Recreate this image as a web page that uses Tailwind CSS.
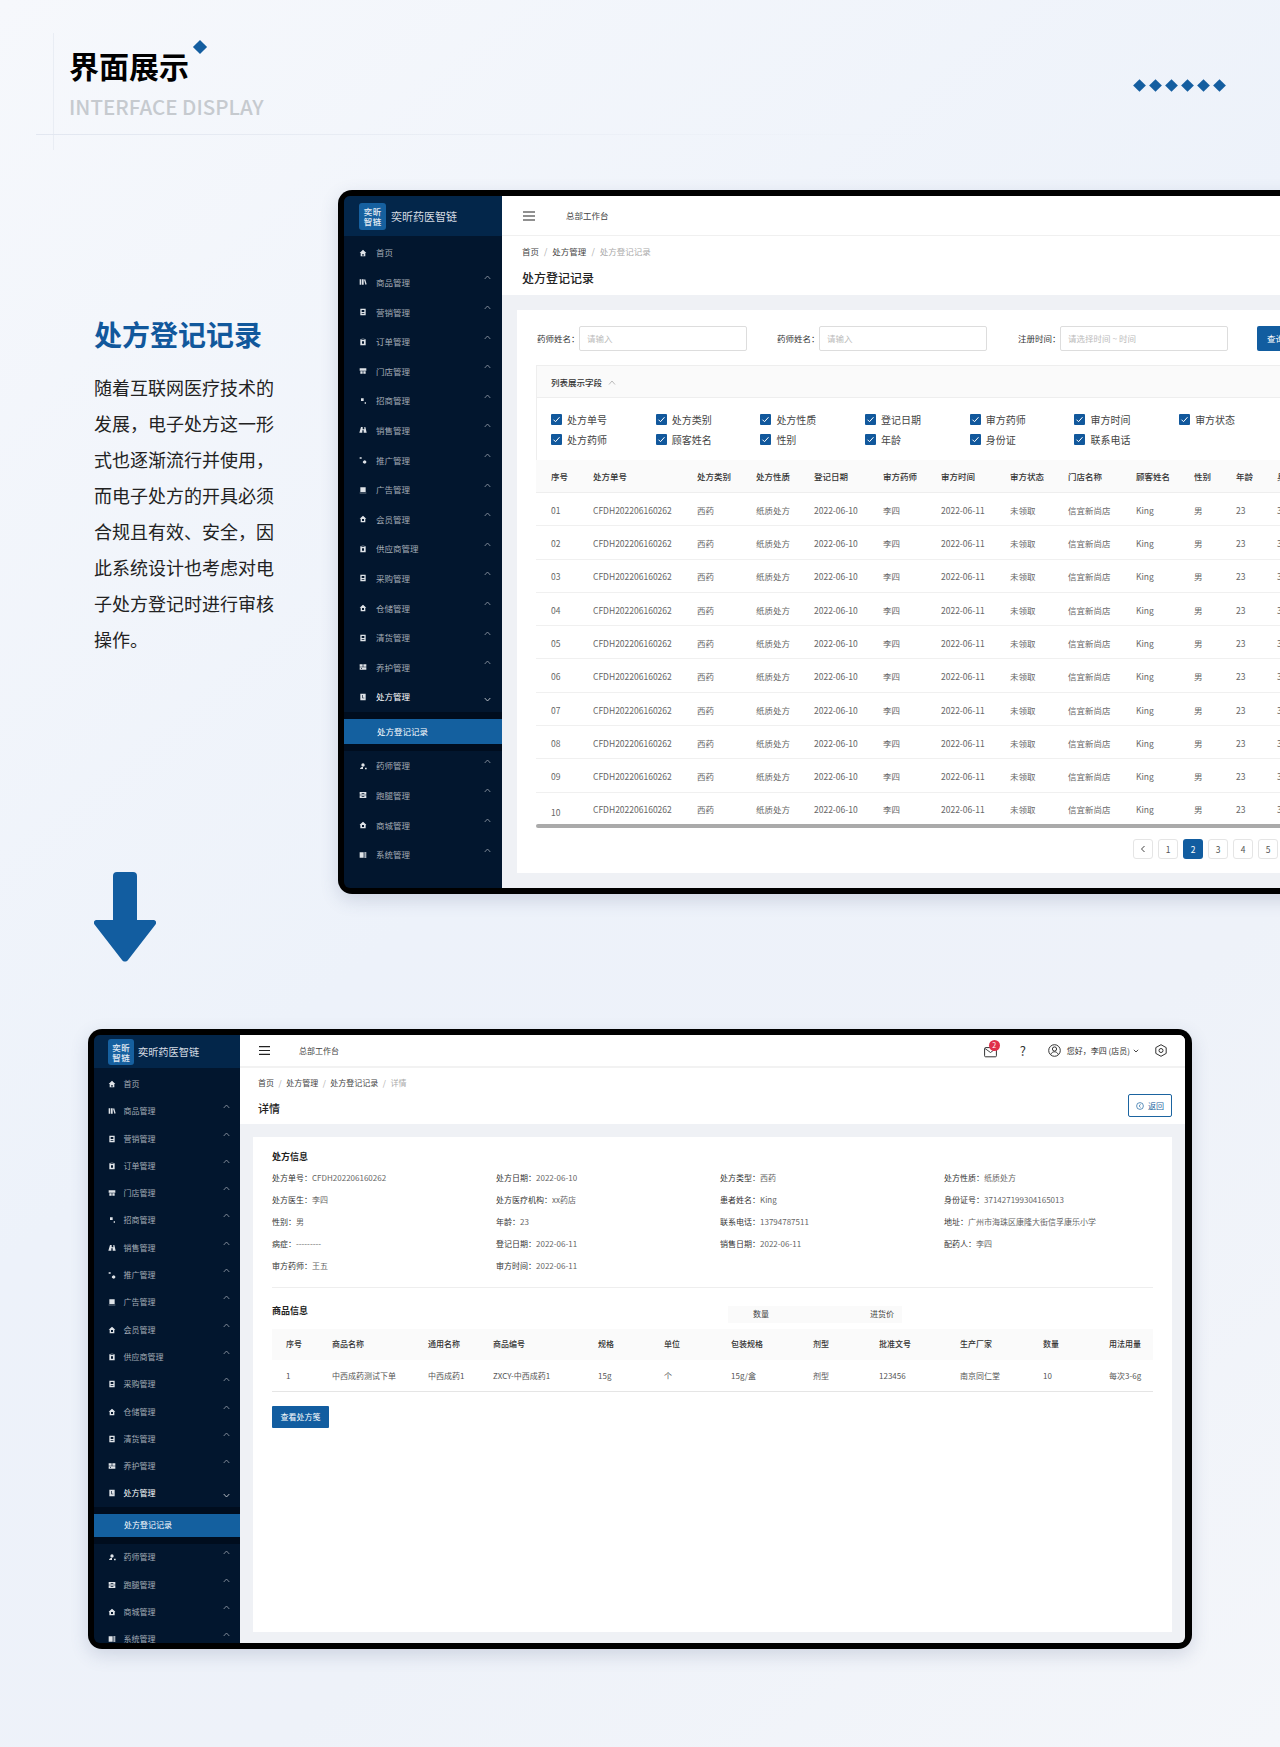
<!DOCTYPE html>
<html lang="zh-CN">
<head>
    <meta charset="UTF-8">
    <title>界面展示</title>
    <script src="https://cdn.jsdelivr.net/npm/@tailwindcss/browser@4"></script>
</head>
<body class="bg-[#f1f4fa]">
<div class="relative w-[1280px] h-[1747px] overflow-hidden font-['Noto_Sans_CJK_SC',sans-serif] bg-[linear-gradient(140deg,#f6f8fc_0%,#edf2fa_45%,#eef2f9_70%,#f4f6fa_100%)]">

    <!-- Section title -->
    <header class="relative h-[190px] flex justify-between">
        <div class="absolute left-[53px] top-[33px] w-px h-[117px] bg-[#e9edf4]"></div>
        <div class="absolute left-[36px] top-[134px] w-[900px] h-px bg-linear-to-r from-[#e2e7f0] to-transparent"></div>
        <div class="absolute left-[195px] top-[42px] w-[10px] h-[10px] rotate-45 bg-[#145ea0]"></div>
        <div class="pl-[69px] pt-[45px]">
            <h1 class="text-[30px] leading-[40px] font-bold text-black">界面展示</h1>
            <p class="mt-[6px] text-[20.500px] leading-[30px] font-medium text-[#c6cacf]">INTERFACE DISPLAY</p>
        </div>
        <div class="flex gap-[7px] pt-[80.5px] pr-[56.5px]">
            <span class="w-[9px] h-[9px] rotate-45 bg-[#145ea0]"></span>
            <span class="w-[9px] h-[9px] rotate-45 bg-[#145ea0]"></span>
            <span class="w-[9px] h-[9px] rotate-45 bg-[#145ea0]"></span>
            <span class="w-[9px] h-[9px] rotate-45 bg-[#145ea0]"></span>
            <span class="w-[9px] h-[9px] rotate-45 bg-[#145ea0]"></span>
            <span class="w-[9px] h-[9px] rotate-45 bg-[#145ea0]"></span>
        </div>
    </header>

    <div class="flex items-start">
        <!-- Intro text -->
        <div class="w-[338px] shrink-0 pl-[94px] pt-[124px]">
            <h2 class="text-[28px] leading-[40px] font-bold text-[#11589c]">处方登记记录</h2>
            <p class="mt-[15px] text-[18px] leading-[36px] text-[#222]">随着互联网医疗技术的<br>发展，电子处方这一形<br>式也逐渐流行并使用，<br>而电子处方的开具必须<br>合规且有效、安全，因<br>此系统设计也考虑对电<br>子处方登记时进行审核<br>操作。</p>
            <svg class="mt-[215px]" width="62" height="90" viewBox="0 0 62 90"><path fill="#125da0" d="M19 4a4 4 0 0 1 4-4h16a4 4 0 0 1 4 4v44h16c3 0 4 2.5 2.5 4.5L34 88c-1.5 2-4.5 2-6 0L.5 52.5C-1 50.5 0 48 3 48h16z"/></svg>
        </div>

        <!-- List screen -->
        <div class="w-[1000px] h-[704px] shrink-0 bg-black rounded-[14px] p-[6px] shadow-[0_6px_18px_rgba(60,80,120,0.18)]">
            <div class="flex h-full rounded-[6px] overflow-hidden">
                <aside id="side-big" class="w-[158px] shrink-0 bg-[#02162e]"></aside>
                <main class="flex-1 min-w-0 bg-[#eff1f5] overflow-hidden">
                    <div class="h-[40px] bg-white border-b border-[#f0f0f0] flex items-center pl-[21px]">
                        <svg width="12" height="10" viewBox="0 0 12 10" class="text-[#222]"><path d="M0 1h12M0 5h12M0 9h12" stroke="currentColor" stroke-width="1.2"/></svg>
                        <span class="ml-[31px] text-[8.5px] text-[#444]">总部工作台</span>
                    </div>
                    <div class="h-[59px] bg-white pl-[20px] pt-[8px]">
                        <div class="flex gap-[5px] text-[8.5px] leading-[14px] text-[#444]"><span>首页</span><span class="text-[#aaa]">/</span><span>处方管理</span><span class="text-[#aaa]">/</span><span class="text-[#aaa]">处方登记记录</span></div>
                        <h3 class="mt-[10px] text-[12px] leading-[20px] font-medium text-[#222]">处方登记记录</h3>
                    </div>
                    <div class="ml-[15px] mt-[15px] w-[800px] h-[563px] bg-white pl-[19px] pt-[16px]">
                        <!-- Filters -->
                        <div class="flex items-center h-[25px] text-[8.5px] text-[#333] whitespace-nowrap">
                            <span class="w-[43px] pl-px">药师姓名：</span>
                            <span class="w-[168px] h-full border border-[#ddd] rounded-[2px] flex items-center pl-[7px] text-[#bbb]">请输入</span>
                            <span class="ml-[30px] w-[42px]">药师姓名：</span>
                            <span class="w-[168px] h-full border border-[#ddd] rounded-[2px] flex items-center pl-[7px] text-[#bbb]">请输入</span>
                            <span class="ml-[31px] w-[42px]">注册时间：</span>
                            <span class="w-[168px] h-full border border-[#ddd] rounded-[2px] flex items-center pl-[7px] text-[#bbb]">请选择时间 ~ 时间</span>
                            <span class="ml-[29px] w-[60px] h-full bg-[#125da0] rounded-[2px] flex items-center pl-[10px] text-white">查询</span>
                        </div>
                        <!-- Field picker -->
                        <div class="mt-[14px] h-[33px] pt-px bg-[#fafafa] border border-[#eeeeee] flex items-center pl-[14px] text-[8.5px] font-medium text-[#333]">
                            列表展示字段
                            <svg class="ml-[6px]" width="8" height="5" viewBox="0 0 8 5"><path d="M1 4.5 4 1l3 3.5" fill="none" stroke="#aaa" stroke-width=".8"/></svg>
                        </div>
                        <div id="fields" class="h-[62px] border-x border-[#eeeeee] pl-[14px] pt-[11px] grid grid-cols-[repeat(7,104.7px)] auto-rows-[20.500px]"></div>
                        <!-- Table -->
                        <div class="h-[33px] bg-[#fafafa] border-b border-[#eeeeee] pl-[15px] grid grid-cols-[42px_104px_59px_58px_69px_58px_69px_58px_68px_58px_42px_41px_42px] items-center text-[8.5px] font-medium text-[#333]">
                            <span>序号</span><span>处方单号</span><span>处方类别</span><span>处方性质</span><span>登记日期</span><span>审方药师</span><span>审方时间</span><span>审方状态</span><span>门店名称</span><span>顾客姓名</span><span>性别</span><span>年龄</span><span>身份证</span>
                        </div>
                        <div id="rows"></div>
                        <div class="h-[4px] -mt-[2px] bg-[#aaaaaa] rounded-full"></div>
                        <!-- Pagination -->
                        <div class="mt-[11px] pl-[597px] flex gap-[5px] text-[8.5px] text-[#555]">
                            <span class="w-[20px] h-[20px] flex items-center justify-center border border-[#e5e5e5] rounded-[3px]"><svg width="6" height="8" viewBox="0 0 6 8"><path d="M4.5 1 1.5 4l3 3" fill="none" stroke="#444"/></svg></span>
                            <span class="w-[20px] h-[20px] flex items-center justify-center border border-[#e5e5e5] rounded-[3px]">1</span>
                            <span class="w-[20px] h-[20px] flex items-center justify-center bg-[#125da0] rounded-[3px] text-white">2</span>
                            <span class="w-[20px] h-[20px] flex items-center justify-center border border-[#e5e5e5] rounded-[3px]">3</span>
                            <span class="w-[20px] h-[20px] flex items-center justify-center border border-[#e5e5e5] rounded-[3px]">4</span>
                            <span class="w-[20px] h-[20px] flex items-center justify-center border border-[#e5e5e5] rounded-[3px]">5</span>
                        </div>
                    </div>
                </main>
            </div>
        </div>
    </div>

    <!-- Detail screen -->
    <div class="ml-[88px] mt-[67px] w-[1104px] h-[620px] bg-black rounded-[14px] pt-[6px] pb-[6px] pl-[6px] pr-[7px] shadow-[0_6px_18px_rgba(60,80,120,0.18)]">
        <div class="flex h-full rounded-[6px] overflow-hidden">
            <aside id="side-small" class="w-[145.5px] shrink-0 bg-[#02162e] overflow-hidden"></aside>
            <main class="flex-1 min-w-0 bg-[#eff1f5]">
                <div class="h-[33px] bg-white border-b-2 border-[#f2f2f2] flex items-center pl-[19.5px] pr-[18px]">
                    <svg width="11" height="9" viewBox="0 0 11 9"><path d="M0 .6h11M0 4.5h11M0 8.4h11" stroke="#222" stroke-width="1.1"/></svg>
                    <span class="ml-[29px] text-[8px] text-[#444]">总部工作台</span>
                    <div class="ml-auto flex items-center text-[8px] text-[#333]">
                        <span class="relative w-[14px] h-[12px]">
                            <svg width="13" height="11" viewBox="0 0 13 11" class="absolute left-0 top-[2px]"><rect x=".6" y=".6" width="11.8" height="9.2" rx="1" fill="none" stroke="#333" stroke-width="1"/><path d="m1 1.5 5.5 4 5.5-4" fill="none" stroke="#333" stroke-width=".9"/></svg>
                            <span class="absolute left-[5px] -top-[5px] w-[11px] h-[11px] rounded-full bg-[#e0304a] text-white text-[7px] leading-[11px] text-center">2</span>
                        </span>
                        <span class="ml-[22px] text-[13px] leading-none">?</span>
                        <svg class="ml-[22px]" width="13" height="13" viewBox="0 0 13 13"><circle cx="6.5" cy="6.5" r="5.8" fill="none" stroke="#333"/><circle cx="6.5" cy="5" r="2.1" fill="none" stroke="#333"/><path d="M2.6 10.6c1-2 2.4-2.8 3.9-2.8s2.900.8 3.900 2.800" fill="none" stroke="#333"/></svg>
                        <span class="ml-[6px]">您好，李四 (店员)</span>
                        <svg class="ml-[3px]" width="6" height="4" viewBox="0 0 6 4"><path d="m.8.8 2.200 2.200L5.200.8" fill="none" stroke="#333" stroke-width=".9"/></svg>
                        <svg class="ml-[16px]" width="12" height="13" viewBox="0 0 12 13"><path d="M6 .7 11.200 3.600v5.800L6 12.300.8 9.400V3.600z" fill="none" stroke="#333"/><circle cx="6" cy="6.500" r="2" fill="none" stroke="#333"/></svg>
                    </div>
                </div>
                <div class="relative h-[56px] bg-white pl-[18.5px] pt-[8px]">
                    <div class="flex gap-[4.500px] text-[8px] leading-[14px] text-[#444]"><span>首页</span><span class="text-[#aaa]">/</span><span>处方管理</span><span class="text-[#aaa]">/</span><span>处方登记记录</span><span class="text-[#aaa]">/</span><span class="text-[#aaa]">详情</span></div>
                    <h3 class="mt-[8px] text-[11px] leading-[20px] font-medium text-[#222]">详情</h3>
                    <span class="absolute right-[13px] top-[26px] w-[44px] h-[23px] border border-[#1b64a0] rounded-[2px] flex items-center justify-center gap-[4px] text-[8px] text-[#1b64a0]">
                        <svg width="8" height="8" viewBox="0 0 8 8"><circle cx="4" cy="4" r="3.400" fill="none" stroke="#1b64a0" stroke-width=".7"/><path d="M4.500 2.300 3.200 4l1.300 1.500" fill="none" stroke="#1b64a0" stroke-width=".7"/></svg>返回
                    </span>
                </div>
                <div class="ml-[13.5px] mr-[13px] mt-[13px] h-[495px] bg-white px-[19px] pt-[13px]">
                    <h4 class="text-[9px] leading-[14px] font-bold text-[#222]">处方信息</h4>
                    <div id="detail" class="mt-[3px] grid grid-cols-[repeat(4,224px)] auto-rows-[21.900px] items-center text-[8px] text-[#666]"></div>
                    <div class="mt-[10.500px] h-px bg-[#eeeeee]"></div>
                    <div class="mt-[18px] h-[17px] flex items-center">
                        <h4 class="-mt-[7px] text-[9px] font-bold text-[#222]">商品信息</h4>
                        <div class="ml-[420px] w-[174px] h-[17px] bg-[#fafafa] text-[8px] text-[#444] flex items-center pl-[25px]"><span>数量</span><span class="ml-[101px]">进货价</span></div>
                    </div>
                    <div class="mt-[6px] h-[31px] bg-[#fafafa] pl-[14px] grid grid-cols-[46px_96px_65px_105px_66px_67px_82px_66px_81px_83px_66px_46px] items-center text-[8px] font-medium text-[#333]">
                        <span>序号</span><span>商品名称</span><span>通用名称</span><span>商品编号</span><span>规格</span><span>单位</span><span>包装规格</span><span>剂型</span><span>批准文号</span><span>生产厂家</span><span>数量</span><span>用法用量</span>
                    </div>
                    <div class="h-[32px] pt-px border-b border-[#e5e5e5] pl-[14px] grid grid-cols-[46px_96px_65px_105px_66px_67px_82px_66px_81px_83px_66px_46px] items-center text-[8px] text-[#555]">
                        <span>1</span><span>中西成药测试下单</span><span>中西成药1</span><span>ZXCY-中西成药1</span><span>15g</span><span>个</span><span>15g/盒</span><span>剂型</span><span>123456</span><span>南京同仁堂</span><span>10</span><span>每次3-6g</span>
                    </div>
                    <button class="mt-[14px] w-[57px] h-[22px] bg-[#125da0] rounded-[1px] text-[8px] text-white">查看处方笺</button>
                </div>
            </main>
        </div>
    </div>
</div>

<script>
    const ICONS = {
        home: 'M6 1 1 6h1.500v5h7V6H11zM5 7.500h2V10H5z',
        goods: 'M1 2h2.500v8H1zM4.500 2H7v8H4.500zM7.500 2.500l1.800-.6 2.200 7.500-1.800.6z',
        note: 'M2 1h8v10H2zM4 3v3h4V3zM4 8v1h4V8z',
        order: 'M2 2h8v9H2zM4 1h4v2H4zM4.500 5v3.500h3V5z',
        shop: 'M1 2h10v3.500H1zM2 6.500h3.500V10H2zM6.500 6.500H10V10H6.500z',
        dots: 'M3 2h4v4H3zM8.500 8h2v2h-2z',
        team: 'M3 1.500h2.500V5H8V1.500h1.500L11.500 10H7V6.500H5V10H.5z',
        chart: 'M1 2h3v2H1zM7 7a2.500 2.500 0 1 1 0 4 2.500 2.500 0 0 1 0-4z',
        panel: 'M2 2h8v7H2zM1 10h10v1H1z',
        store: 'M6 1 1 5.500h1.500V11h7V5.500H11zM4.500 6h3v3h-3z',
        care: 'M1 2h4.500v3.500H1zM6.500 2H11v3.500H6.500zM1 6.500h10V10H1zM3 7.500v1h1.500v-1z',
        script: 'M2 1h8v10H2zM5 3v5h3V7H6V3z',
        pharm: 'M6 2a2.500 2.500 0 0 1 2.500 2.500C8.500 6 7.500 7 6 7a2.500 2.500 0 0 1 0-5zM1.500 10.500C2 8.500 3.500 7.500 6 7.500v3zM9 8.500h2.500V11H9z',
        errand: 'M1 1.500h10v4H1zM4 3v1h4V3zM1 6.500h10v4H1zM4 8v1h4V8z',
        mall: 'M6 1 1 5.500l1 1V11h8V6.500l1-1zM4.500 6v3h3V6z',
        sys: 'M1 2h6v8H1zM8 2h3v2H8zM8 5h3v2H8zM8 8h3v2H8z'
    };
    const MENU = [
        ['首页', 'home'], ['商品管理', 'goods'], ['营销管理', 'note'], ['订单管理', 'order'], ['门店管理', 'shop'],
        ['招商管理', 'dots'], ['销售管理', 'team'], ['推广管理', 'chart'], ['广告管理', 'panel'], ['会员管理', 'store'],
        ['供应商管理', 'order'], ['采购管理', 'note'], ['仓储管理', 'store'], ['清货管理', 'note'], ['养护管理', 'care'],
        ['处方管理', 'script', 'open'], ['药师管理', 'pharm'], ['跑腿管理', 'errand'], ['商城管理', 'mall'], ['系统管理', 'sys']
    ];
    const SIZES = {
        big: {
            head: 'h-[40px] bg-[#03264a] flex items-center pl-[15px]',
            logo: 'w-[27px] h-[27px] text-[8.500px]', title: 'ml-[5px] text-[11px]', list: 'pt-[2px]',
            item: 'h-[29.600px] pl-[15px] pr-[11px] text-[8.500px]', label: 'ml-[9px]', icon: 8,
            sub: 'h-[39.500px] py-[7px] my-0', band: 'h-[25px] pl-[33px] text-[8.500px]'
        },
        small: {
            head: 'h-[33px] bg-[#03264a] flex items-center pl-[14px]',
            logo: 'w-[26px] h-[26px] text-[8.500px]', title: 'ml-[4px] text-[10.200px]', list: 'pt-[2.300px]',
            item: 'h-[27.300px] pl-[14px] pr-[10px] text-[8px]', label: 'ml-[7.500px]', icon: 8,
            sub: 'h-[36.700px] py-[6.800px] my-0', band: 'h-[23px] pl-[30px] text-[8px]'
        }
    };

    function renderSide(id, size) {
        const s = SIZES[size];
        const items = MENU.map(([name, icon, open]) => {
            const color = open ? 'text-white' : 'text-[#a3abb5]';
            const caret = open
                ? '<svg class="mt-[5px]" width="7" height="5" viewBox="0 0 7 5"><path d="m.7 1 2.800 3 2.800-3" fill="none" stroke="#c7ccd3" stroke-width=".9"/></svg>'
                : '<svg class="-mt-[7px]" width="7" height="5" viewBox="0 0 7 5"><path d="m.7 4 2.800-3 2.800 3" fill="none" stroke="#9aa3ae" stroke-width=".8"/></svg>';
            const row = `<div class="flex items-center ${s.item} ${color}">
                <svg width="${s.icon}" height="${s.icon}" viewBox="0 0 12 12" class="shrink-0"><path fill="#dfe3e8" fill-rule="evenodd" d="${ICONS[icon]}"/></svg>
                <span class="${s.label}">${name}</span>
                ${name === '首页' ? '' : '<span class="ml-auto flex">' + caret + '</span>'}
            </div>`;
            if (!open) return row;
            return row + `<div class="${s.sub} bg-[#000d1e]"><div class="${s.band} bg-[#14609f] flex items-center text-white">处方登记记录</div></div>`;
        }).join('');
        document.getElementById(id).innerHTML = `
            <div class="${s.head}">
                <span class="${s.logo} bg-[#16609f] rounded-[3px] grid grid-cols-[repeat(2,9px)] justify-center content-center auto-rows-[10px] leading-[10px] text-center font-medium text-[#e8eef5]">
                    <i class="not-italic">奕</i><i class="not-italic">昕</i><i class="not-italic">智</i><i class="not-italic">链</i>
                </span>
                <span class="${s.title} text-[#d5dbe2]">奕昕药医智链</span>
            </div>
            <div class="${s.list}">${items}</div>`;
    }
    renderSide('side-big', 'big');
    renderSide('side-small', 'small');

    // checkboxes of the field picker
    const fields = ['处方单号', '处方类别', '处方性质', '登记日期', '审方药师', '审方时间', '审方状态', '处方药师', '顾客姓名', '性别', '年龄', '身份证', '联系电话'];
    document.getElementById('fields').innerHTML = fields.map(name => `
        <label class="flex items-center text-[10px] text-[#444]">
            <span class="w-[11px] h-[11px] bg-[#11589c] rounded-[1px] flex items-center justify-center">
                <svg width="9" height="9" viewBox="0 0 9 9"><path d="m1.500 4.700 2 2 4-4.500" fill="none" stroke="#fff" stroke-width="1"/></svg>
            </span>
            <span class="ml-[5px]">${name}</span>
        </label>`).join('');

    // prescription rows
    let rows = '';
    for (let i = 1; i <= 10; i++) {
        const no = String(i).padStart(2, '0');
        const cells = [no, 'CFDH202206160262', '西药', '纸质处方', '2022-06-10', '李四', '2022-06-11', '未领取', '信宜新尚店', 'King', '男', '23', '37142719930'];
        rows += `<div class="h-[33.300px] pt-[2px] border-b border-[#f0f0f0] pl-[15px] grid grid-cols-[42px_104px_59px_58px_69px_58px_69px_58px_68px_58px_42px_41px_60px] items-center text-[8.500px] text-[#666] whitespace-nowrap">
            ${cells.map((c, n) => `<span class="${i === 10 && n === 0 ? 'pt-[5px]' : ''}">${c}</span>`).join('')}
        </div>`;
    }
    document.getElementById('rows').innerHTML = rows;

    // detail fields
    const detail = [
        ['处方单号', 'CFDH202206160262'], ['处方日期', '2022-06-10'], ['处方类型', '西药'], ['处方性质', '纸质处方'],
        ['处方医生', '李四'], ['处方医疗机构', 'xx药店'], ['患者姓名', 'King'], ['身份证号', '371427199304165013'],
        ['性别', '男'], ['年龄', '23'], ['联系电话', '13794787511'], ['地址', '广州市海珠区康隆大街信孚康乐小学'],
        ['病症', '---------'], ['登记日期', '2022-06-11'], ['销售日期', '2022-06-11'], ['配药人', '李四'],
        ['审方药师', '王五'], ['审方时间', '2022-06-11']
    ];
    document.getElementById('detail').innerHTML = detail.map(([k, v]) => `<div><span class="text-[#333]">${k}：</span>${v}</div>`).join('');
</script>
</body>
</html>
